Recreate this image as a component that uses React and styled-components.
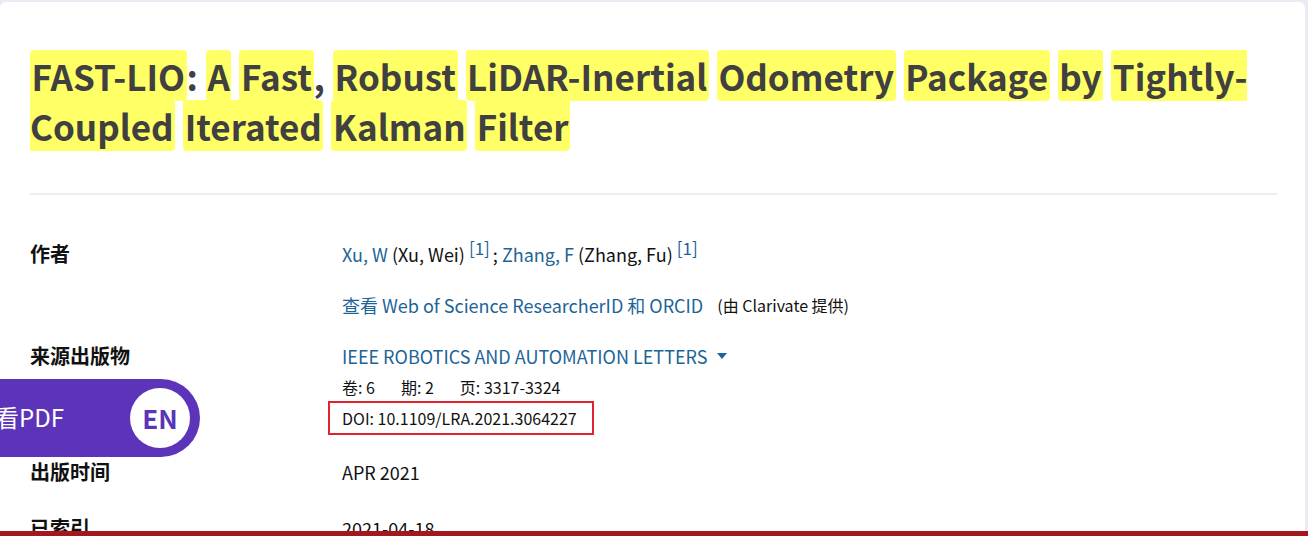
import styled, { createGlobalStyle } from "styled-components";

const GlobalStyle = createGlobalStyle`
  html, body {
    margin: 0;
    padding: 0;
    background: #e9ebf4;
    font-family: "Noto Sans CJK SC", "Noto Sans", sans-serif;
    color: #1b1b1b;
  }
`;

const Page = styled.div`
  padding-top: 2px;
  padding-right: 3px;
`;

const Card = styled.main`
  background: #ffffff;
  border-radius: 6px;
  padding: 49px 28px 40px 30px;
  min-height: 700px;
`;

const Title = styled.h1`
  margin: 0;
  font-size: 35px;
  font-weight: 700;
  line-height: 50px;
  color: #404040;
`;

const Mark = styled.mark`
  background: #ffff66;
  color: inherit;
  border-radius: 4px;
  padding: 0 1.6px;
`;

const Divider = styled.hr`
  border: 0;
  height: 2px;
  background: #ededf0;
  margin: 42px 0 46px;
`;

const Row = styled.section`
  display: grid;
  grid-template-columns: 312px 1fr;
  margin-bottom: ${({ $gap }) => $gap || 24}px;
`;

const Label = styled.h3`
  margin: 0;
  font-size: 20px;
  font-weight: 700;
  line-height: 26px;
  color: #111;
`;

const Values = styled.div`
  display: flex;
  flex-direction: column;
  align-items: flex-start;
`;

const Line = styled.div`
  font-size: ${({ $small }) => ($small ? 16 : 18)}px;
  line-height: ${({ $small }) => ($small ? 22 : 26)}px;
  margin-top: ${({ $top }) => $top || 0}px;
  color: #111;
  display: flex;
  align-items: center;
  gap: ${({ $spread }) => ($spread ? 26 : 0)}px;
`;

const Link = styled.a`
  color: #1d6497;
  text-decoration: none;
`;

const Sup = styled.sup`
  color: #1d6497;
  font-size: 17px;
  line-height: 0;
  position: relative;
  top: -6px;
  margin: 0 3px 0 4px;
`;

const Note = styled.span`
  font-size: 16px;
  margin-left: 14px;
`;

const Caret = styled.span`
  display: inline-block;
  width: 0;
  height: 0;
  margin-left: 10px;
  border-left: 5.5px solid transparent;
  border-right: 5.5px solid transparent;
  border-top: 6px solid #1d6497;
  vertical-align: middle;
`;

const DoiBox = styled.div`
  margin: 3px 0 0 -14px;
  border: 2px solid #e0242d;
  padding: 3px 15px 3px 12px;
  font-size: 16px;
  line-height: 24px;
  color: #111;
`;

const PdfButton = styled.button`
  position: fixed;
  left: -50px;
  top: 379px;
  height: 78px;
  width: 250px;
  border: 0;
  border-radius: 0 39px 39px 0;
  background: #5b34b9;
  color: #fff;
  display: flex;
  align-items: center;
  justify-content: space-between;
  padding: 0 10px 3px 21px;
  font-family: inherit;
  font-size: 24px;
  cursor: pointer;
`;

const Lang = styled.span`
  width: 60px;
  height: 60px;
  margin-top: 2px;
  border-radius: 50%;
  background: #fff;
  color: #5b34b9;
  font-weight: 700;
  font-size: 26px;
  display: flex;
  align-items: center;
  justify-content: center;
`;

const BottomBar = styled.div`
  position: fixed;
  left: 0;
  right: 0;
  bottom: 0;
  height: 5px;
  background: #a3171f;
`;

const titleWords = [
  ["FAST-LIO", ": "],
  ["A", " "],
  ["Fast", ", "],
  ["Robust", " "],
  ["LiDAR-Inertial", " "],
  ["Odometry", " "],
  ["Package", " "],
  ["by", " "],
  ["Tightly-Coupled", " "],
  ["Iterated", " "],
  ["Kalman", " "],
  ["Filter", ""],
];

export default function App() {
  return (
    <Page>
      <GlobalStyle />
      <Card>
        <Title>
          {titleWords.map(([w, sep]) => (
            <span key={w}>
              <Mark>{w}</Mark>
              {sep}
            </span>
          ))}
        </Title>
        <Divider />

        <Row $gap={25}>
          <Label>作者</Label>
          <Values>
            <Line>
              <Link href="#">Xu, W</Link>&nbsp;(Xu, Wei)<Sup>[1]</Sup>;&nbsp;
              <Link href="#">Zhang, F</Link>&nbsp;(Zhang, Fu)<Sup>[1]</Sup>
            </Line>
            <Line $top={25}>
              <Link href="#">查看 Web of Science ResearcherID 和 ORCID</Link>
              <Note>(由 Clarivate 提供)</Note>
            </Line>
          </Values>
        </Row>

        <Row $gap={24}>
          <Label>来源出版物</Label>
          <Values>
            <Line>
              <Link href="#">IEEE ROBOTICS AND AUTOMATION LETTERS</Link>
              <Caret />
            </Line>
            <Line $small $spread $top={7}>
              <span>卷: 6</span>
              <span>期: 2</span>
              <span>页: 3317-3324</span>
            </Line>
            <DoiBox>DOI: 10.1109/LRA.2021.3064227</DoiBox>
          </Values>
        </Row>

        <Row $gap={30}>
          <Label>出版时间</Label>
          <Values>
            <Line>APR 2021</Line>
          </Values>
        </Row>

        <Row>
          <Label>已索引</Label>
          <Values>
            <Line>2021-04-18</Line>
          </Values>
        </Row>
      </Card>

      <PdfButton>
        查看PDF
        <Lang>EN</Lang>
      </PdfButton>
      <BottomBar />
    </Page>
  );
}
